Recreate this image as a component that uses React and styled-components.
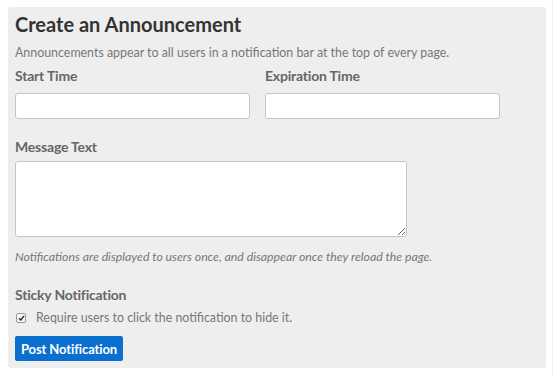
import React from 'react';
import styled, { createGlobalStyle } from 'styled-components';

const GlobalStyle = createGlobalStyle`
  html, body {
    margin: 0;
    padding: 0;
    background: #ffffff;
  }
  body {
    font-family: Lato, "Open Sans", "Liberation Sans", sans-serif;
  }
`;

const Page = styled.div`
  box-sizing: border-box;
  width: 553px;
  height: 376px;
  padding: 7px 7px 8px 8px;
  border-right: 1px solid #f0f0f0;
`;

const Panel = styled.form`
  background: #eeeeee;
  border-radius: 3px;
  padding: 6px 7px 7px 7px;
  width: 538px;
  box-sizing: border-box;
  height: 361px;
`;

const Title = styled.h2`
  margin: 0;
  font-size: 20px;
  line-height: 22px;
  font-weight: 700;
  color: #333333;
`;

const Lead = styled.p`
  margin: 10px 0 0;
  font-size: 12.4px;
  line-height: 15px;
  color: #777777;
`;

const Row = styled.div`
  display: grid;
  grid-template-columns: 235px 235px;
  column-gap: 15px;
  margin-top: ${p => p.$top || 0}px;
`;

const Field = styled.div`
  display: flex;
  flex-direction: column;
  margin-top: ${p => p.$top || 0}px;
`;

const Label = styled.label`
  font-size: 14px;
  line-height: 17px;
  font-weight: 700;
  letter-spacing: -0.2px;
  color: #666666;
  margin-bottom: ${p => p.$gap || 10}px;
`;

const Input = styled.input`
  box-sizing: border-box;
  width: 235px;
  height: 26px;
  border: 1px solid #c4c4c4;
  border-radius: 3px;
  background: #ffffff;
  margin: 0;
`;

const TextArea = styled.textarea`
  box-sizing: border-box;
  width: 392px;
  height: 76px;
  border: 1px solid #c4c4c4;
  border-radius: 3px;
  background: #ffffff;
  margin: 0;
  resize: both;
`;

const Help = styled.p`
  margin: 12px 0 0;
  font-size: 12.25px;
  line-height: 15px;
  font-style: italic;
  color: #777777;
`;

const CheckRow = styled.label`
  display: flex;
  align-items: center;
  gap: 10px;
  font-size: 12.4px;
  line-height: 16px;
  color: #777777;
`;

const CheckBox = styled.span`
  box-sizing: border-box;
  width: 10px;
  height: 10px;
  border: 1px solid #9a9a9a;
  border-radius: 2px;
  background: #f6f6f6;
  display: flex;
  align-items: center;
  justify-content: center;
  margin-left: 1px;
`;

const Button = styled.button`
  margin-top: 10px;
  width: 108px;
  height: 25px;
  border: none;
  border-radius: 2px;
  background: #0b6fcf;
  color: #ffffff;
  font-family: inherit;
  font-size: 13px;
  font-weight: 700;
  letter-spacing: -0.1px;
  padding: 0;
`;

export default function App() {
  return (
    <>
      <GlobalStyle />
      <Page>
        <Panel onSubmit={e => e.preventDefault()}>
          <Title>Create an Announcement</Title>
          <Lead>Announcements appear to all users in a notification bar at the top of every page.</Lead>
          <Row $top={7}>
            <Field>
              <Label $gap={9}>Start Time</Label>
              <Input type="text" />
            </Field>
            <Field>
              <Label $gap={9}>Expiration Time</Label>
              <Input type="text" />
            </Field>
          </Row>
          <Field $top={19}>
            <Label $gap={6}>Message Text</Label>
            <TextArea />
          </Field>
          <Help>Notifications are displayed to users once, and disappear once they reload the page.</Help>
          <Field $top={22}>
            <Label $gap={7}>Sticky Notification</Label>
            <CheckRow>
              <CheckBox>
                <svg width="7" height="6" viewBox="0 0 7 6">
                  <path d="M1 3.2 L2.8 5 L6 1" fill="none" stroke="#333" strokeWidth="1.5" />
                </svg>
              </CheckBox>
              Require users to click the notification to hide it.
            </CheckRow>
          </Field>
          <Button type="submit">Post Notification</Button>
        </Panel>
      </Page>
    </>
  );
}
